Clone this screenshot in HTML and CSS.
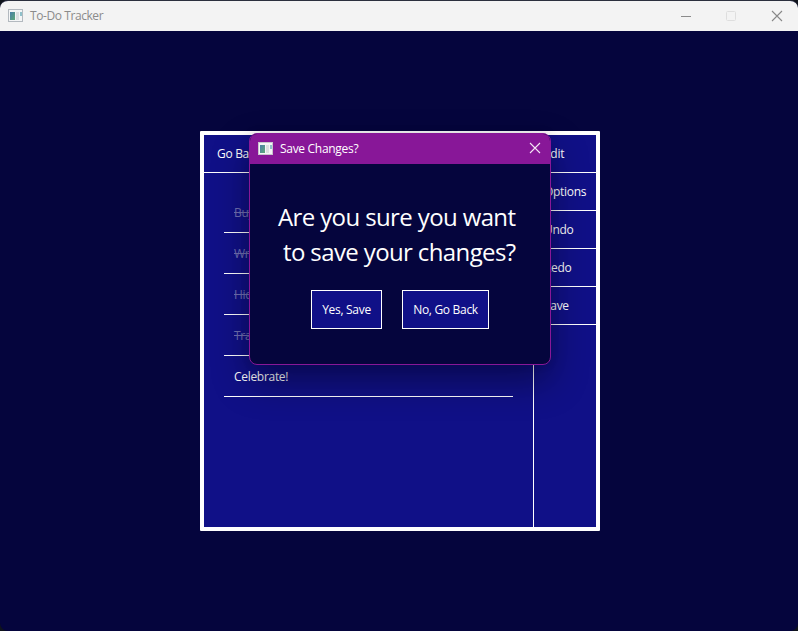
FILE: index.html
```html
<!DOCTYPE html>
<html lang="en">
<head>
<meta charset="utf-8">
<title>To-Do Tracker</title>
<link rel="stylesheet" href="styles.css">
</head>
<body>
<div class="window">
  <header class="titlebar">
    <svg class="app-icon" width="15" height="13" viewBox="0 0 15 13"><defs><linearGradient id="g" x1="0" y1="0" x2="1" y2="1"><stop offset="0" stop-color="#4a7fa8"/><stop offset="1" stop-color="#5fa878"/></linearGradient></defs><rect x=".5" y=".5" width="14" height="12" fill="#f4f5f6" stroke="#b3b9bf"/><rect x="2" y="3" width="5" height="8" fill="url(#g)"/><rect x="8" y="3" width="3" height="8" fill="#dcdfe1"/><rect x="12" y="3" width="2" height="4" fill="#8fc0ca"/></svg>
    <span class="titlebar-text">To-Do Tracker</span>
    <svg class="controls" width="104" height="12" viewBox="0 0 104 12"><path d="M1 6.5h10" stroke="#8b8b8b"/><rect x="46.500" y="1.500" width="9" height="9" rx="1" fill="none" stroke="#dedede"/><path d="M92 1l10 10M102 1l-10 10" stroke="#888" stroke-width="1.1"/></svg>
  </header>
  <main class="stage">
    <section class="panel">
      <div class="content">
        <div class="topbar">Go Back</div>
        <ul class="todos">
          <li class="done">Buy gifts</li>
          <li class="done">Wrap gifts</li>
          <li class="done">Hide gifts</li>
          <li class="done">Track Santa</li>
          <li>Celebrate!</li>
        </ul>
      </div>
      <nav class="menu">
        <a>Edit</a><a>Options</a><a>Undo</a><a>Redo</a><a>Save</a>
      </nav>
    </section>
  </main>
  <div class="dialog">
    <header class="dialog-bar">
      <svg class="app-icon" width="15" height="13" viewBox="0 0 15 13"><rect x=".5" y=".5" width="14" height="12" fill="#f4f5f6" stroke="#c8c5cc"/><rect x="2" y="3" width="5" height="8" fill="url(#g)"/><rect x="8" y="3" width="3" height="8" fill="#dcdfe1"/><rect x="12" y="3" width="2" height="4" fill="#8fc0ca"/></svg>
      <span class="dialog-title">Save Changes?</span>
      <svg class="close" width="12" height="12" viewBox="0 0 12 12"><path d="M1 1l10 10M11 1l-10 10" stroke="#f3e6f5" stroke-width="1.1"/></svg>
    </header>
    <div class="question">
      <div class="line-one">Are you sure you want</div>
      <div class="line-two">to save your changes?</div>
    </div>
    <div class="actions">
      <button class="yes">Yes, Save</button>
      <button class="no">No, Go Back</button>
    </div>
  </div>
</div>
</body>
</html>
```
FILE: styles.css
```css
* { box-sizing: border-box; }
body {
  margin: 0;
  background: #10141c;
  font: 12px/18px "Open Sans", "Noto Sans", sans-serif;
  letter-spacing: -0.3px;
  color: #fff;
}
.window {
  position: relative;
  height: 631px;
  border-top: 1px solid #2b2f3d;
  border-radius: 8px;
  overflow: hidden;
  background: #05053d;
}
.titlebar {
  display: flex;
  align-items: center;
  height: 30px;
  padding: 0 14px 0 8px;
  background: #f3f3f3;
  color: #8b8b8b;
}
.titlebar-text { letter-spacing: -0.42px; }
.app-icon { flex: none; margin-right: 7px; position: relative; top: -1px; }
.controls { margin-left: auto; }
.stage { display: flex; justify-content: center; padding: 100px 0 0 2px; }
.panel {
  display: flex;
  width: 400px;
  height: 400px;
  border: 4px solid #fff;
  border-radius: 1px;
  background: #101087;
}
.content { flex: 1; }
.topbar {
  height: 38px;
  padding: 10px 13px;
  border-bottom: 1px solid #fff;
}
.todos { list-style: none; margin: 19px 20px 0; padding: 0; }
.todos li {
  height: 41px;
  padding: 12px 10px;
  border-bottom: 1px solid #fff;
}
.todos .done { color: #7070b4; text-decoration: line-through; }
.menu { width: 63px; border-left: 1px solid #fff; }
.menu a {
  display: block;
  height: 38px;
  padding: 10px 0 0 10px;
  border-bottom: 1px solid #fff;
}
.dialog {
  position: absolute;
  left: 249px;
  top: 132px;
  width: 302px;
  height: 232px;
  border: 1px solid #881798;
  border-radius: 8px;
  overflow: hidden;
  background: #05053d;
  box-shadow: 0 16px 36px rgba(0, 0, 0, .4), 0 0 10px rgba(0, 0, 0, .1);
}
.dialog-bar {
  display: flex;
  align-items: center;
  height: 30px;
  padding: 0 9px 0 8px;
  background: #881798;
}
.close { margin-left: auto; position: relative; top: -1px; }
.question {
  padding: 35px 0 0 28px;
  font-size: 24px;
  line-height: 35px;
  white-space: nowrap;
  letter-spacing: -0.62px;
}
.line-two { padding-left: 5px; }
.actions { display: flex; gap: 20px; padding: 21px 0 0 61px; }
.actions button {
  height: 39px;
  padding: 0;
  border: 1px solid #fff;
  background: #101087;
  color: #fff;
  font: inherit;
  letter-spacing: inherit;
}
.yes { width: 71px; }
.no { width: 87px; }
```
